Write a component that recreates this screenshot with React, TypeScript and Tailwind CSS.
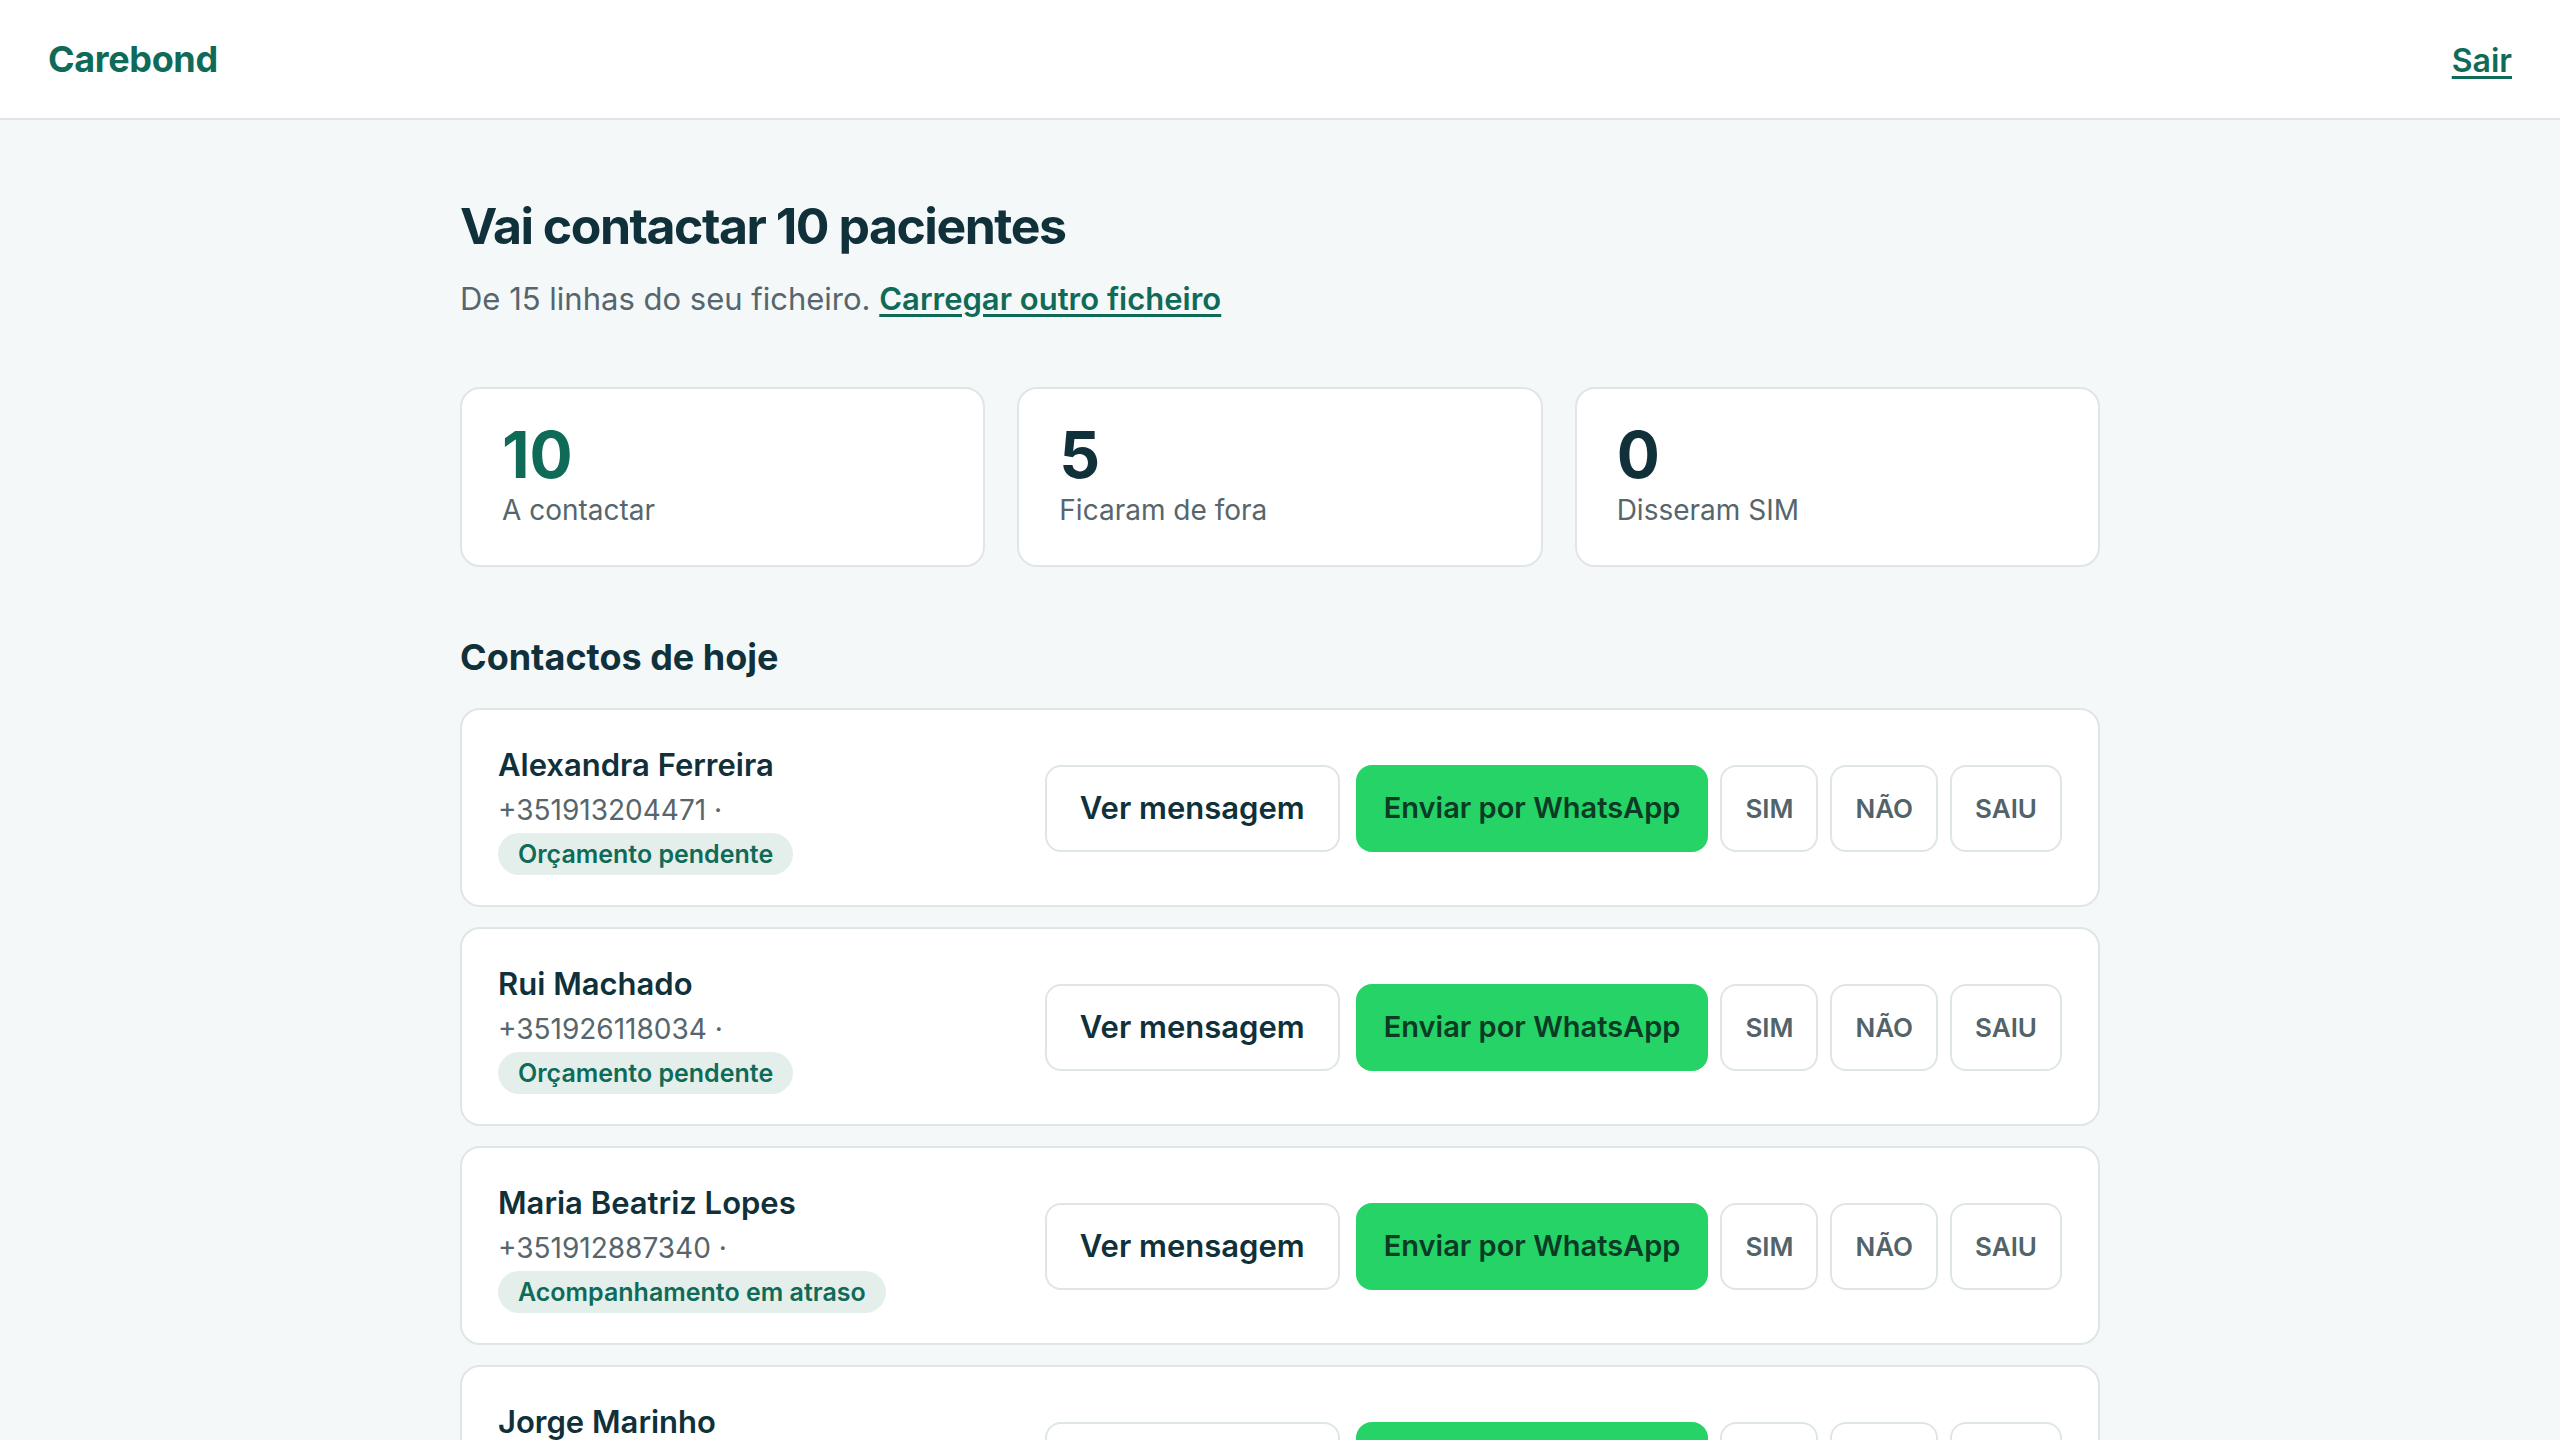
import React from "react";

type Contact = {
  id: number;
  name: string;
  phone: string;
  reason: string;
};

const contacts: Contact[] = [
  { id: 1, name: "Alexandra Ferreira", phone: "+351913204471", reason: "Orçamento pendente" },
  { id: 2, name: "Rui Machado", phone: "+351926118034", reason: "Orçamento pendente" },
  { id: 3, name: "Maria Beatriz Lopes", phone: "+351912887340", reason: "Acompanhamento em atraso" },
  { id: 4, name: "Jorge Marinho", phone: "+351935402219", reason: "Orçamento pendente" },
  { id: 5, name: "Inês Carvalho", phone: "+351917653308", reason: "Acompanhamento em atraso" },
  { id: 6, name: "Pedro Santos", phone: "+351962140075", reason: "Orçamento pendente" },
  { id: 7, name: "Catarina Sousa", phone: "+351914328861", reason: "Orçamento pendente" },
  { id: 8, name: "Miguel Rodrigues", phone: "+351938770142", reason: "Acompanhamento em atraso" },
  { id: 9, name: "Sofia Almeida", phone: "+351925561903", reason: "Orçamento pendente" },
  { id: 10, name: "Tiago Pereira", phone: "+351916204587", reason: "Orçamento pendente" },
];

const stats = [
  { value: "10", label: "A contactar", accent: true },
  { value: "5", label: "Ficaram de fora", accent: false },
  { value: "0", label: "Disseram SIM", accent: false },
];

function ContactRow({ contact }: { contact: Contact }) {
  return (
    <div className="flex items-center justify-between rounded-[20px] border-2 border-[#dfe6e8] bg-white px-[36px] pt-[31px] pb-[30px]">
      <div className="flex flex-col items-start">
        <p className="text-[31px] leading-[48px] font-semibold text-[#10303a]">{contact.name}</p>
        <p className="text-[28px] leading-[42px] text-[#56666c]">{contact.phone} ·</p>
        <span className="mt-[2px] rounded-full bg-[#e4efec] px-5 py-[5px] text-[25px] leading-[32px] font-semibold text-[#0f6b58]">
          {contact.reason}
        </span>
      </div>
      <div className="flex items-center gap-3">
        <button className="mr-1 h-[87px] rounded-[16px] border-2 border-[#dfe6e8] bg-white px-[33px] text-[31px] font-semibold text-[#10303a]">
          Ver mensagem
        </button>
        <button className="h-[87px] rounded-[16px] bg-[#25d366] px-[28px] text-[29px] font-semibold text-[#0b3b25]">
          Enviar por WhatsApp
        </button>
        {["SIM", "NÃO", "SAIU"].map((label) => (
          <button
            key={label}
            className="h-[87px] rounded-[16px] border-2 border-[#dfe6e8] bg-white px-[23px] text-[26px] font-semibold text-[#52636a]"
          >
            {label}
          </button>
        ))}
      </div>
    </div>
  );
}

export default function App() {
  return (
    <div className="flex h-screen flex-col bg-[#f5f8f9] font-['Inter',sans-serif]">
      <header className="flex h-[120px] shrink-0 items-center justify-between border-b-2 border-[#dfe6e8] bg-white px-12">
        <span className="text-[36px] font-bold tracking-[-0.01em] text-[#0f6b58]">Carebond</span>
        <a href="#" className="mt-1 text-[32px] font-semibold text-[#0f6b58] underline underline-offset-4">
          Sair
        </a>
      </header>

      <main className="flex-1 overflow-y-auto">
        <div className="mx-auto max-w-[1640px] pt-[76px] pb-20">
          <h1 className="text-[50px] leading-[60px] font-bold tracking-[-0.03em] text-[#10303a]">
            Vai contactar 10 pacientes
          </h1>
          <p className="mt-5 text-[31px] leading-[45px] text-[#56666c]">
            De 15 linhas do seu ficheiro.{" "}
            <a href="#" className="font-semibold text-[#0f6b58] underline underline-offset-4">
              Carregar outro ficheiro
            </a>
          </p>

          <div className="mt-[66px] grid grid-cols-3 gap-8">
            {stats.map((stat) => (
              <div key={stat.label} className="rounded-[20px] border-2 border-[#dfe6e8] bg-white px-10 pt-[34px] pb-[34px]">
                <p className={`text-[64px] leading-none font-bold ${stat.accent ? "text-[#0f6b58]" : "text-[#10303a]"}`}>
                  {stat.value}
                </p>
                <p className="mt-[2px] text-[28px] leading-[42px] text-[#56666c]">{stat.label}</p>
              </div>
            ))}
          </div>

          <h2 className="mt-[66px] mb-[27px] text-[36px] leading-[48px] font-bold text-[#10303a]">Contactos de hoje</h2>

          <div className="flex flex-col gap-[20px]">
            {contacts.map((contact) => (
              <ContactRow key={contact.id} contact={contact} />
            ))}
          </div>
        </div>
      </main>
    </div>
  );
}
